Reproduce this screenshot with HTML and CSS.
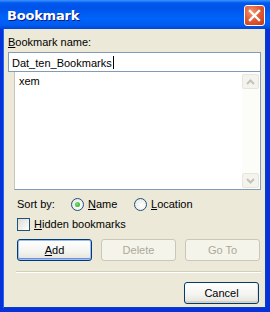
FILE: index.html
```html
<!DOCTYPE html>
<html lang="en">
<head>
    <meta charset="UTF-8">
    <title>Bookmark</title>
    <link rel="stylesheet" href="styles.css">
</head>
<body>
    <div class="janela">
        <div class="barra-titulo">
            <span class="titulo">Bookmark</span>
            <div class="fechar">
                <svg width="13" height="13" viewBox="0 0 13 13">
                    <path d="M2 2 L11 11 M11 2 L2 11" stroke="#fff" stroke-width="2.4" stroke-linecap="square"/>
                </svg>
            </div>
        </div>

        <div class="cliente">
            <div class="rotulo"><u>B</u>ookmark name:</div>
            <div class="caixa-texto">Dat_ten_Bookmarks<span class="cursor"></span></div>
            <div class="lista">
                <div class="itens">
                    <div class="item">xem</div>
                </div>
                <div class="rolagem">
                    <div class="seta">
                        <svg width="9" height="6" viewBox="0 0 9 6"><path d="M1 5 L4.5 1.5 L8 5" fill="none" stroke="#c4c2b8" stroke-width="2"/></svg>
                    </div>
                    <div class="trilho"></div>
                    <div class="seta">
                        <svg width="9" height="6" viewBox="0 0 9 6"><path d="M1 1 L4.5 4.5 L8 1" fill="none" stroke="#c4c2b8" stroke-width="2"/></svg>
                    </div>
                </div>
            </div>

            <div class="linha-ordem">
                <span class="ordem-rotulo">Sort by:</span>
                <label class="opcao opcao-nome"><span class="radio marcado"></span><u>N</u>ame</label>
                <label class="opcao"><span class="radio"></span><u>L</u>ocation</label>
            </div>

            <label class="linha-check"><span class="check"></span><u>H</u>idden bookmarks</label>

            <div class="botoes">
                <button class="botao padrao"><u>A</u>dd</button>
                <button class="botao" disabled>Delete</button>
                <button class="botao" disabled>Go To</button>
            </div>

            <div class="separador"></div>

            <div class="rodape">
                <button class="botao">Cancel</button>
            </div>
        </div>
    </div>
</body>
</html>
```

FILE: styles.css
```css
body {
    margin: 0;
    font-family: "Liberation Sans", Arial, sans-serif;
    font-size: 11px;
    color: #000;
    background-color: #ece9d8;
}

.janela {
    width: 270px;
    height: 312px;
    display: flex;
    flex-direction: column;
}

.barra-titulo {
    height: 29px;
    flex-shrink: 0;
    display: flex;
    align-items: center;
    justify-content: space-between;
    padding: 0 5px 0 7px;
    background: linear-gradient(to bottom, #3d95ff 0px, #0058ee 3px, #0053e8 8px, #0063fa 18px, #005cf0 25px, #0046d6 29px);
}

.titulo {
    color: white;
    font-family: "DejaVu Sans", sans-serif;
    font-weight: bold;
    font-size: 13px;
    letter-spacing: -0.2px;
    text-shadow: 1px 1px 0 #0a1883;
    padding-top: 2px;
}

.fechar {
    width: 19px;
    height: 19px;
    border: 1px solid #fff;
    border-radius: 3px;
    background: radial-gradient(circle at 35% 30%, #f2956e 0%, #e35c36 45%, #c2381b 100%);
    display: flex;
    align-items: center;
    justify-content: center;
    margin-top: 2px;
}

.cliente {
    flex: 1;
    border-style: solid;
    border-color: #0831d9;
    border-width: 0 4px 4px 3px;
    box-shadow: inset 1px 0 0 #166aee, inset -1px 0 0 #0441c4, inset 0 -1px 0 #0441c4;
    padding: 7px 5px 0 5px;
}

.rotulo {
    height: 16px;
}

.caixa-texto {
    height: 20px;
    box-sizing: border-box;
    border: 1px solid #7f9db9;
    background: white;
    padding: 3px 3px 0 3px;
    width: 253px;
}

.cursor {
    display: inline-block;
    width: 1px;
    height: 13px;
    background: #000;
    vertical-align: -2px;
    margin-left: 1px;
}

.lista {
    margin-left: 6px;
    width: 247px;
    height: 118px;
    box-sizing: border-box;
    border-left: 1px solid #c8c6bb;
    border-right: 1px solid #7f9db9;
    border-bottom: 1px solid #7f9db9;
    background: white;
    display: flex;
}

.itens {
    flex: 1;
    padding: 3px 4px;
}

.rolagem {
    width: 17px;
    margin: 2px 1px 1px 0;
    display: flex;
    flex-direction: column;
    background: #fcfcf9;
}

.trilho {
    flex: 1;
}

.seta {
    height: 15px;
    box-sizing: border-box;
    border: 1px solid #e8e6dc;
    border-radius: 2px;
    background: #f4f3ee;
    display: flex;
    align-items: center;
    justify-content: center;
}

.linha-ordem {
    display: flex;
    align-items: center;
    margin-top: 7px;
    height: 14px;
    padding-left: 9px;
}

.ordem-rotulo {
    width: 54px;
}

.opcao {
    display: flex;
    align-items: center;
}

.opcao-nome {
    width: 63px;
}

.radio {
    width: 13px;
    height: 13px;
    box-sizing: border-box;
    border: 1px solid #1c5180;
    border-radius: 50%;
    background: radial-gradient(circle at 60% 60%, #fff 0%, #f0efe8 60%, #d8d5c8 100%);
    margin-right: 4px;
    display: flex;
    align-items: center;
    justify-content: center;
}

.radio.marcado::after {
    content: "";
    width: 5px;
    height: 5px;
    border-radius: 50%;
    background: radial-gradient(circle at 40% 40%, #7be07b, #21a121);
}

.linha-check {
    display: flex;
    align-items: center;
    margin-top: 6px;
    height: 14px;
    padding-left: 9px;
}

.check {
    width: 13px;
    height: 13px;
    box-sizing: border-box;
    border: 1px solid #1c5180;
    background: linear-gradient(135deg, #dcdbd5, #fff);
    margin-right: 4px;
}

.botoes {
    display: flex;
    gap: 9px;
    margin-top: 8px;
    padding-left: 9px;
}

.botao {
    width: 75px;
    height: 22px;
    box-sizing: border-box;
    font-family: "Liberation Sans", Arial, sans-serif;
    font-size: 11px;
    color: #000;
    border: 1px solid #003c74;
    border-radius: 3px;
    background: linear-gradient(to bottom, #ffffff 0%, #f3f3ef 60%, #e3e2da 100%);
    box-shadow: inset 0 -2px 0 #d6d0c5, inset -1px 0 0 #e3e2da;
    padding: 0;
}

.botao.padrao {
    box-shadow: inset 0 0 0 1px #9bbdf4, inset 0 -2px 0 #6c8fe0;
}

.botao:disabled {
    color: #aca899;
    border-color: #c9c7ba;
    background: #f5f4ea;
    box-shadow: none;
}

.separador {
    margin: 10px 0 0 8px;
    width: 245px;
    height: 1px;
    background: #d0d0bf;
    border-bottom: 1px solid #fff;
}

.rodape {
    display: flex;
    justify-content: flex-end;
    margin-top: 9px;
    padding-right: 2px;
}
```
